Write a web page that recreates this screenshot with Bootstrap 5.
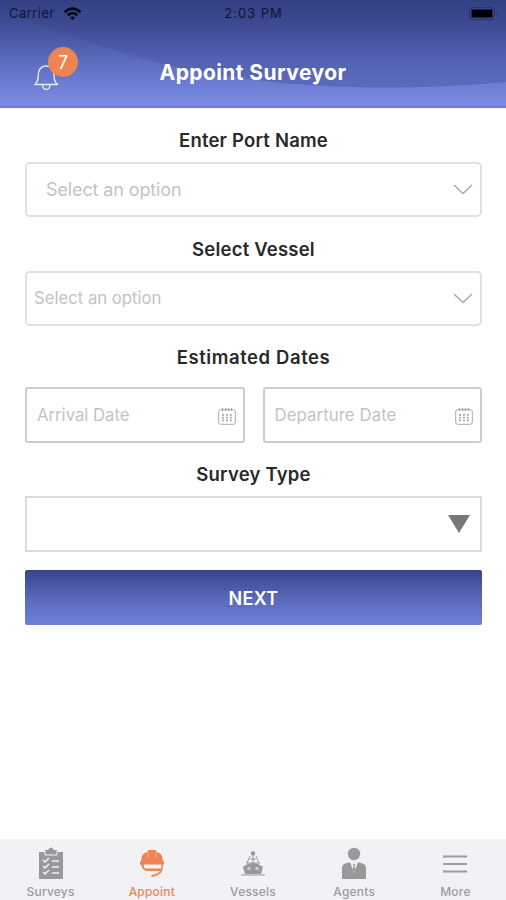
<!DOCTYPE html>
<html lang="en">
<head>
<meta charset="utf-8">
<meta name="viewport" content="width=device-width, initial-scale=1">
<title>Appoint Surveyor</title>
<link href="https://cdn.jsdelivr.net/npm/bootstrap@5.3.0/dist/css/bootstrap.min.css" rel="stylesheet">
<style>
body{font-family:Inter,"Liberation Sans",sans-serif;background:#fff}
.app-screen{height:900px;width:506px;overflow:hidden}
.app-header{height:108px;background:linear-gradient(#344186 0,#3f4c95 22%,#5d6dbf 58%,#7b8be3 96%,#6877cc 100%)}
.header-wave{z-index:0}
.status-row{height:27px;font-size:13px;color:#10152f;letter-spacing:.45px;padding:0 8px 0 9px}
.status-time{letter-spacing:.95px}
.status-row>*,.title-row>*{flex:1 1 0}
.title-row{height:81px;padding:0 34px}
.page-title{flex:0 0 auto!important;font-size:21px;font-weight:700;letter-spacing:.42px;padding-top:10px;line-height:1}
.bell-wrap{width:45px;height:44px;margin-top:3px}
.bell-count{width:30px;height:30px;left:14px;top:0;background:#ed8451;font-size:18px;font-weight:400}
.form-area{padding:0 24px 0 25px}
.field-label{height:54px;padding-top:10px;font-size:18.500px;font-weight:600;color:#292929;line-height:1;letter-spacing:.2px}
.dates-label{height:61px;padding-top:2px;letter-spacing:.58px}
.survey-label{height:53px;padding-top:10px}
.field-box{height:55px;border:2px solid #e0e0e0;border-radius:5px;color:#c3c3c3;font-size:18px;background:#fff}
.port-box{padding:0 7px 0 19px}
.port-box span{letter-spacing:-.12px}
.vessel-box{padding:0 7px}
.vessel-box span{font-size:16.700px}
.date-box{height:56px;border:2px solid #cdcdcd;border-radius:3px;font-size:16.700px;padding:2px 7px 0 10px}
.date-box.flex-fill{flex:1 1 0!important}
.date-box+.date-box{margin-left:18px}
.date-box+.date-box span{letter-spacing:.12px}
.type-box{height:56px;border:2px solid #dcdcdc;border-radius:0;padding-right:10px}
.next-btn{height:55px;margin-top:18px;padding-top:8px;border:0;border-radius:2px;font-size:18px;font-weight:600;letter-spacing:.35px;background:linear-gradient(#37448d,#5a68b9 52%,#7080da)}
.tab-bar{height:61px;background:#f1f1f6;color:#9c9c9f;font-size:12px;font-weight:500;letter-spacing:.2px}
.tab-bar a{color:inherit;flex:1 1 0;padding-top:8px}
.tab-bar a.current{color:#ef8354}
.tab-bar span{line-height:15px;margin-top:4px}
</style>
</head>
<body>
<main class="app-screen d-flex flex-column">
<header class="app-header position-relative text-white">
<svg class="header-wave position-absolute top-0 start-0" width="506" height="108" viewBox="0 0 506 108"><defs><linearGradient id="waveShade" x2="0" y2="1"><stop stop-color="#303e7f" stop-opacity=".35"/><stop offset=".65" stop-color="#46539f" stop-opacity=".4"/><stop offset="1" stop-color="#5260b1" stop-opacity=".68"/></linearGradient></defs><path d="M0 0H506V82C390 92 290 89 185 69C118 54 65 35 0 8Z" fill="url(#waveShade)"/></svg>
<div class="status-row position-relative d-flex align-items-center">
<div class="d-flex align-items-center gap-2"><span>Carrier</span><svg width="19" height="14" viewBox="0 0 19 14" fill="none" stroke="#080b19" stroke-width="2.6"><path d="M1.5 5.2Q9.5-2 17.500 5.200M4.600 8.200Q9.500 4 14.400 8.200"/><path d="M9.500 13.300 6.900 10.600Q9.500 8.600 12.100 10.600Z" fill="#080b19" stroke="none"/></svg></div>
<div class="status-time text-center">2:03 PM</div>
<div class="text-end lh-1"><svg width="29" height="14" viewBox="0 0 29 14"><rect x=".5" y=".5" width="25" height="12" rx="3.500" fill="none" stroke="#29346c"/><rect x="2.500" y="2.500" width="21" height="8" rx="1" fill="#000"/><path d="M27 4q2 2.500 0 5" fill="#29346c"/></svg></div>
</div>
<div class="title-row position-relative d-flex align-items-center">
<div><div class="bell-wrap position-relative d-flex align-items-end"><svg width="25" height="27" viewBox="0 0 25 27" fill="none" stroke="#e6eaff" stroke-width="1.400" stroke-linejoin="round"><path d="M1 20.500C4 18 4.200 15.500 4.200 11.500C4.200 5.500 7 2 12 2S20 5.500 20 11.500C20 15.500 20.500 18 23.500 20.500ZM8.500 21c.5 6 7 6 7.500 0"/></svg><span class="bell-count position-absolute rounded-circle d-flex align-items-center justify-content-center">7</span></div></div>
<h1 class="page-title m-0">Appoint Surveyor</h1>
<div></div>
</div>
</header>
<section class="form-area flex-grow-1">
<div class="field-label d-flex align-items-center justify-content-center">Enter Port Name</div>
<div class="field-box port-box d-flex align-items-center justify-content-between"><span>Select an option</span><svg width="20" height="11" viewBox="0 0 20 11" fill="none" stroke="#aaa" stroke-width="1.500"><path d="m1 1 9 8.500L19 1"/></svg></div>
<div class="field-label d-flex align-items-center justify-content-center">Select Vessel</div>
<div class="field-box vessel-box d-flex align-items-center justify-content-between"><span>Select an option</span><svg width="20" height="11" viewBox="0 0 20 11" fill="none" stroke="#aaa" stroke-width="1.500"><path d="m1 1 9 8.500L19 1"/></svg></div>
<div class="field-label dates-label d-flex align-items-center justify-content-center">Estimated Dates</div>
<div class="d-flex">
<div class="field-box date-box flex-fill d-flex align-items-center justify-content-between"><span>Arrival Date</span><svg width="18" height="17" viewBox="0 0 18 17"><g fill="none" stroke="#aaa"><rect x=".7" y="1.700" width="16.600" height="14.600" rx="2"/><path d="M4.500 0v3m3-3v3m3-3v3m3-3v3" stroke-width="1.300"/><path d="M4 6.800h10M4 9.600h10M4 12.400h10" stroke-width="1.700" stroke-dasharray="2 1.900"/></g></svg></div>
<div class="field-box date-box flex-fill d-flex align-items-center justify-content-between"><span>Departure Date</span><svg width="18" height="17" viewBox="0 0 18 17"><g fill="none" stroke="#aaa"><rect x=".7" y="1.700" width="16.600" height="14.600" rx="2"/><path d="M4.500 0v3m3-3v3m3-3v3m3-3v3" stroke-width="1.300"/><path d="M4 6.800h10M4 9.600h10M4 12.400h10" stroke-width="1.700" stroke-dasharray="2 1.900"/></g></svg></div>
</div>
<div class="field-label survey-label d-flex align-items-center justify-content-center">Survey Type</div>
<div class="field-box type-box d-flex align-items-center justify-content-end"><svg width="22" height="18" viewBox="0 0 22 18"><path d="M0 0h22L11 18Z" fill="#777"/></svg></div>
<button type="button" class="next-btn btn text-white w-100 d-flex align-items-center justify-content-center">NEXT</button>
</section>
<nav class="tab-bar d-flex text-center">
<a href="#" class="d-flex flex-column align-items-center text-decoration-none"><svg width="26" height="33" viewBox="0 0 26 33"><path d="M1 5h6V3h3q3-5 6 0h3v2h6v27H1Z" fill="#99999b"/><path d="M7 4v4h12V4" fill="none" stroke="#f1f1f6"/><g fill="none" stroke="#f1f1f6" stroke-width="1.500"><path d="m5 13 2 2 4-4m3 3h7M5 19l2 2 4-4m3 3h7M5 25l2 2 4-4m3 3h7"/></g></svg><span>Surveys</span></a>
<a href="#" class="current d-flex flex-column align-items-center text-decoration-none"><svg width="26" height="33" viewBox="0 0 26 33"><path d="M2 14Q2 6 9 4.500V3h8v1.500Q24 6 24 14l1 1v2.500h-1Q25 28 13 30l-1-2q7-1 9-4H8q-5-1-6-6.500H1V15Z" fill="#ef8354"/><path d="M4.500 17.500h18v4H6Q4.500 20 4.500 17.500Z" fill="#f6f3f5"/><path d="M9 5v6m8-6v6" fill="none" stroke="#f4b79c" stroke-width="1"/></svg><span>Appoint</span></a>
<a href="#" class="d-flex flex-column align-items-center text-decoration-none"><svg width="26" height="33" viewBox="0 0 26 33"><g fill="#99999b"><circle cx="13" cy="6.500" r="2.200"/><path d="M3 20q10-8 20 0l-2 7H5Z"/></g><path d="M13 8v8M7 16l3-7m6 0 3 7M10 12h6M6 16h14M1 28h24" stroke="#99999b" fill="none"/><path d="M7.500 20h3v3h-3Zm8 0h3v3h-3Z" fill="#c9c9cd"/></svg><span>Vessels</span></a>
<a href="#" class="d-flex flex-column align-items-center text-decoration-none"><svg width="26" height="33" viewBox="0 0 26 33"><circle cx="13" cy="7" r="6.200" fill="#99999b"/><path d="M1 32V21q0-4 5-5l4-1h6l4 1q5 1 5 5v11Z" fill="#99999b"/><path d="m9 15 4 11 4-11Z" fill="#f1f1f6"/><path d="m12 17h2l-.5 2 1 4-1.500 2-1.500-2 1-4Z" fill="#99999b"/></svg><span>Agents</span></a>
<a href="#" class="d-flex flex-column align-items-center text-decoration-none"><svg width="26" height="33" viewBox="0 0 26 33"><path d="M1 9.500h24M1 17h24M1 24.500h24" stroke="#9b9b9e" stroke-width="1.800"/></svg><span>More</span></a>
</nav>
</main>
<script src="https://cdn.jsdelivr.net/npm/bootstrap@5.3.0/dist/js/bootstrap.bundle.min.js"></script>
</body>
</html>
